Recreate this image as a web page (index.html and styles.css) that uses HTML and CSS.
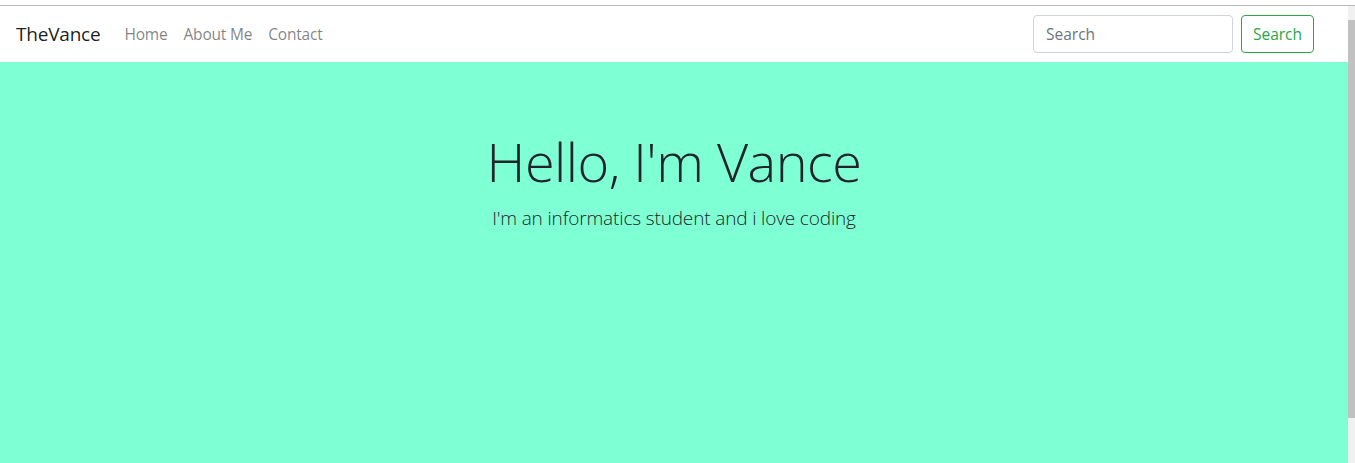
FILE: index.html
```html
<!DOCTYPE html>
<html lang="en">
<head>
<meta charset="utf-8">
<title>TheVance</title>
<link rel="stylesheet" href="styles.css">
</head>
<body>
<div class="frame">
  <div class="page">
    <nav class="navbar">
      <a class="brand" href="#">TheVance</a>
      <ul class="nav-links">
        <li><a href="#">Home</a></li>
        <li><a href="#">About Me</a></li>
        <li><a href="#">Contact</a></li>
      </ul>
      <form class="search">
        <input class="search-input" type="search" placeholder="Search">
        <button class="search-btn" type="button">Search</button>
      </form>
    </nav>
    <section class="hero">
      <h1 class="hero-title">Hello, I'm Vance</h1>
      <p class="hero-lead">I'm an informatics student and i love coding</p>
    </section>
  </div>
  <div class="scrollbar"><div class="thumb"></div></div>
</div>
</body>
</html>
```
FILE: styles.css
```css
* { box-sizing: border-box; }
html, body { margin: 0; padding: 0; height: 100%; overflow: hidden; }
body {
  font-family: "Open Sans", "Noto Sans", sans-serif;
  color: #212529;
  background: #fff;
  padding-top: 5px;
}
.frame {
  display: flex;
  height: 100%;
  border-top: 1px solid #b9b9b9;
}
.page {
  flex: 1;
  display: flex;
  flex-direction: column;
  min-width: 0;
}
.scrollbar {
  width: 7px;
  background: #f1f1f1;
  display: flex;
  flex-direction: column;
  padding-top: 14px;
  padding-bottom: 45px;
}
.thumb {
  flex: 1;
  background: #c1c1c1;
}
.navbar {
  height: 56px;
  display: flex;
  align-items: center;
  padding: 0 34px 0 16px;
  background: #fff;
}
.brand {
  font-size: 19px;
  color: rgba(0,0,0,.9);
  text-decoration: none;
  margin-right: 16px;
  letter-spacing: -0.2px;
}
.nav-links {
  list-style: none;
  display: flex;
  margin: 0;
  padding: 0;
  flex: 1;
}
.nav-links a {
  display: block;
  padding: 8px 8px;
  font-size: 15.5px;
  color: rgba(0,0,0,.5);
  text-decoration: none;
  letter-spacing: -0.2px;
}
.search {
  display: flex;
  align-items: center;
  gap: 8px;
}
.search-input {
  width: 200px;
  height: 38px;
  border: 1px solid #ced4da;
  border-radius: 4px;
  padding: 6px 12px;
  font-family: inherit;
  font-size: 15.5px;
  color: #495057;
}
.search-input::placeholder { color: #6c757d; }
.search-btn {
  height: 38px;
  width: 73px;
  border: 1px solid #28a745;
  border-radius: 4px;
  background: #fff;
  color: #28a745;
  font-family: inherit;
  font-size: 15.5px;
  padding: 0;
}
.hero {
  flex: 1;
  background: #7fffd4;
  padding: 66px 32px 64px;
  text-align: center;
}
.hero-title {
  margin: 0 0 9px;
  font-size: 54px;
  font-weight: 300;
  line-height: 1.24;
  letter-spacing: -0.5px;
}
.hero-lead {
  margin: 0;
  font-size: 19px;
  font-weight: 300;
  line-height: 1.5;
  letter-spacing: -0.15px;
}
```
